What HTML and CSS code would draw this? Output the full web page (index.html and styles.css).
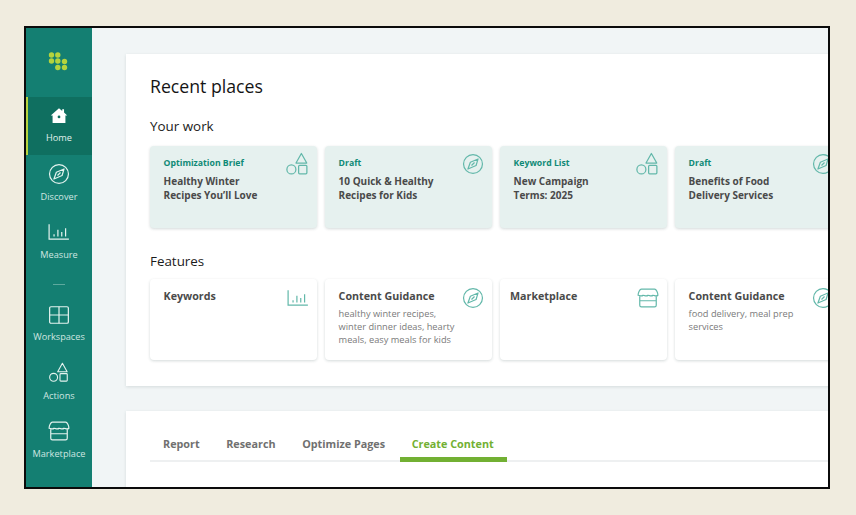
FILE: index.html
```html
<!DOCTYPE html>
<html lang="en">
<head>
<meta charset="utf-8">
<title>Recent places</title>
<link rel="stylesheet" href="styles.css">
</head>
<body>
<svg class="defs" width="0" height="0" aria-hidden="true">
  <defs>
    <symbol id="i-shapes" viewBox="0 0 20 20" fill="none" stroke="currentColor" stroke-width="1">
      <path d="M13.100 1.200 17.400 8.800H8.800Z" stroke-linejoin="round"/>
      <circle cx="5.100" cy="13.900" r="3.600"/>
      <rect x="10.900" y="10.600" width="6.600" height="6.800" rx=".8"/>
    </symbol>
    <symbol id="i-compass" viewBox="0 0 20 20" fill="none" stroke="currentColor" stroke-width="1.1">
      <circle cx="10" cy="10" r="8.600"/>
      <path d="M14.600 5.400 12.800 11.400 5.400 14.600 7.600 8.400Z" stroke-linejoin="round"/>
      <path d="M8.600 11.400 11.400 8.600"/>
    </symbol>
    <symbol id="i-chart" viewBox="0 0 20 20" fill="none" stroke="currentColor" stroke-width="1.1">
      <path d="M1 3V16.500H19"/>
      <path d="M5.500 14V12M9 14V8M12.500 14V10M16 14V6.500"/>
    </symbol>
    <symbol id="i-store" viewBox="0 0 20 20" fill="none" stroke="currentColor" stroke-width="1.1">
      <path d="M4 2H16C17.500 2 19 5 19 7.500 17.500 9 16 7.500 14.500 7.500 13 9 11.500 7.500 10 7.500 8.500 9 7 7.500 5.500 7.500 4 9 2.500 7.500 1 7.500 1 5 2.500 2 4 2Z" stroke-linejoin="round"/>
      <path d="M2.500 8.500V16.500C2.500 17.500 3 18 4 18H16C17 18 17.500 17.500 17.500 16.500V8.500M2.500 12.500H17.500"/>
    </symbol>
    <symbol id="i-grid" viewBox="0 0 20 20" fill="none" stroke="currentColor" stroke-width="1.1">
      <rect x="1.500" y="2.500" width="17" height="15" rx="1.200"/>
      <path d="M10 2.500V17.500M1.500 10H18.500"/>
    </symbol>
    <symbol id="i-home" viewBox="-2 -2 24 24">
      <path fill="currentColor" d="M10 1.500 13.500 4.500V2.500H15.500V6.300L19 9.500H17V17.500H3V9.500H1Z"/>
      <circle cx="10" cy="11" r="1.500" fill="#0f6f60"/>
    </symbol>
  </defs>
</svg>
<div class="frame">
  <nav class="rail">
    <div class="logo">
      <svg viewBox="0 0 21 21" width="21" height="21" fill="#b5d33d" aria-hidden="true">
        <circle cx="3.500" cy="3" r="2.700"/><circle cx="9.800" cy="3" r="2.700"/>
        <circle cx="3.500" cy="9" r="2.700"/><circle cx="9.800" cy="9" r="2.700"/><circle cx="16.500" cy="9.500" r="2.700"/>
        <circle cx="9.800" cy="15.500" r="2.700"/><circle cx="16.500" cy="15.500" r="2.700"/>
      </svg>
    </div>
    <a class="nav-item nav-active"><svg class="nav-icon"><use href="#i-home"/></svg><span>Home</span></a>
    <a class="nav-item nav-upper"><svg class="nav-icon"><use href="#i-compass"/></svg><span>Discover</span></a>
    <a class="nav-item nav-upper"><svg class="nav-icon"><use href="#i-chart"/></svg><span>Measure</span></a>
    <div class="nav-sep"></div>
    <a class="nav-item"><svg class="nav-icon"><use href="#i-grid"/></svg><span>Workspaces</span></a>
    <a class="nav-item nav-lower"><svg class="nav-icon"><use href="#i-shapes"/></svg><span>Actions</span></a>
    <a class="nav-item nav-lower"><svg class="nav-icon"><use href="#i-store"/></svg><span>Marketplace</span></a>
  </nav>
  <main class="content">
    <section class="panel recent">
      <h1>Recent places</h1>
      <h2 class="work-title">Your work</h2>
      <div class="cards">
        <article class="card tinted">
          <div class="eyebrow">Optimization Brief</div>
          <div class="card-title">Healthy Winter<br>Recipes You’ll Love</div>
          <svg class="card-icon icon-shapes"><use href="#i-shapes"/></svg>
        </article>
        <article class="card tinted">
          <div class="eyebrow">Draft</div>
          <div class="card-title">10 Quick &amp; Healthy<br>Recipes for Kids</div>
          <svg class="card-icon"><use href="#i-compass"/></svg>
        </article>
        <article class="card tinted">
          <div class="eyebrow">Keyword List</div>
          <div class="card-title">New Campaign<br>Terms: 2025</div>
          <svg class="card-icon icon-shapes"><use href="#i-shapes"/></svg>
        </article>
        <article class="card tinted">
          <div class="eyebrow">Draft</div>
          <div class="card-title">Benefits of Food<br>Delivery Services</div>
          <svg class="card-icon"><use href="#i-compass"/></svg>
        </article>
      </div>
      <h2 class="features-title">Features</h2>
      <div class="cards cards-features">
        <article class="card feature">
          <div class="feature-title">Keywords</div>
          <svg class="card-icon"><use href="#i-chart"/></svg>
        </article>
        <article class="card feature">
          <div class="feature-title">Content Guidance</div>
          <p>healthy winter recipes,<br>winter dinner ideas, hearty<br>meals, easy meals for kids</p>
          <svg class="card-icon"><use href="#i-compass"/></svg>
        </article>
        <article class="card feature">
          <div class="feature-title">Marketplace</div>
          <svg class="card-icon"><use href="#i-store"/></svg>
        </article>
        <article class="card feature">
          <div class="feature-title">Content Guidance</div>
          <p>food delivery, meal prep<br>services</p>
          <svg class="card-icon"><use href="#i-compass"/></svg>
        </article>
      </div>
    </section>
    <section class="panel tabs-panel">
      <div class="tabs">
        <a class="tab">Report</a>
        <a class="tab">Research</a>
        <a class="tab">Optimize Pages</a>
        <a class="tab tab-active">Create Content</a>
      </div>
    </section>
  </main>
</div>
</body>
</html>
```
FILE: styles.css
```css
* { box-sizing: border-box; }
html, body { margin: 0; height: 100%; }
body {
  background: #f0ecdf;
  font-family: "Open Sans", "Noto Sans", sans-serif;
  padding: 26px 26px 26px 24px;
  overflow: hidden;
}
.defs { position: absolute; }
.frame {
  width: 806px;
  height: 463px;
  border: 2px solid #0b0b0b;
  display: flex;
  overflow: hidden;
  background: #f1f5f6;
}
.rail {
  width: 66px;
  flex: none;
  background: #147f72;
  display: flex;
  flex-direction: column;
  align-items: stretch;
}
.logo { height: 69px; padding: 24px 0 0 22px; }
.logo svg { display: block; }
.nav-item {
  display: flex;
  flex-direction: column;
  align-items: center;
  height: 58px;
  padding-top: 8px;
  color: #cfe6e1;
  font-size: 9.200px;
  line-height: 14px;
  white-space: nowrap;
}
.nav-item span { margin-top: 4px; }
.nav-upper span, .nav-lower span { margin-top: 5px; }
.nav-icon { width: 22px; height: 22px; color: #e4f3ef; flex: none; }
.nav-active {
  background: #0f6f60;
  border-left: 2px solid #b5d33d;
  color: #e1f1ed;
  padding-right: 2px;
}
.nav-active span { margin-top: 4px; }
.nav-active .nav-icon { color: #fff; }
.nav-sep { width: 12px; height: 1px; background: #5ea99e; margin: 13px auto 11px; flex: none; }
.content {
  flex: 1;
  min-width: 0;
  padding: 26px 0 0 34px;
  display: flex;
  flex-direction: column;
  gap: 25px;
}
.panel {
  background: #fff;
  width: 900px;
  flex: none;
  box-shadow: 0 1px 3px rgba(40, 70, 70, .14);
}
.recent { height: 332px; padding: 20px 24px 0; }
h1 { margin: 0; font-size: 17.700px; line-height: 24px; font-weight: 500; color: #151515; }
h2 { margin: 0; font-size: 13.400px; line-height: 20px; font-weight: 500; color: #1b1b1b; }
.work-title { margin-top: 18px; }
.features-title { margin-top: 23px; }
.cards { display: flex; gap: 8px; margin-top: 10px; }
.cards-features { margin-top: 8px; }
.card {
  position: relative;
  width: 167px;
  flex: none;
  height: 82px;
  border-radius: 4px;
  box-shadow: 0 1px 3px rgba(40, 70, 70, .2);
}
.tinted { background: #e6f1ef; padding: 11px 13.600px; }
.eyebrow { font-size: 8.700px; line-height: 12px; font-weight: 700; color: #0f8a76; white-space: nowrap; }
.card-title { margin-top: 6px; font-size: 10px; line-height: 13.500px; font-weight: 700; color: #4a4a4a; white-space: nowrap; }
.card-icon { position: absolute; top: 7px; right: 8px; width: 22px; height: 22px; color: #63b8aa; }
.icon-shapes { width: 25px; height: 25px; top: 6px; right: 7px; }
.feature { background: #fff; height: 81px; padding: 9px 13.600px; }
.feature .card-icon { top: 8px; }
.feature:nth-child(3) { padding-left: 10px; }
.feature-title { font-size: 10.700px; line-height: 16px; font-weight: 700; color: #4a4a4a; white-space: nowrap; }
.feature p { margin: 3px 0 0; font-size: 9.250px; line-height: 13px; color: #7a7a7a; white-space: nowrap; }
.tabs-panel { height: 100px; padding: 20px 24px 0; }
.tabs { display: flex; border-bottom: 2px solid #eef0f1; height: 31px; }
.tab { font-size: 10.800px; line-height: 26px; font-weight: 700; color: #707070; padding: 0 13.300px; margin-bottom: -2px; white-space: nowrap; }
.tab:first-child { padding-left: 13px; }
.tab-active { color: #72b033; border-bottom: 5px solid #72b033; height: 31px; width: 107px; padding: 0 12px; margin-left: 1.300px; }
```
